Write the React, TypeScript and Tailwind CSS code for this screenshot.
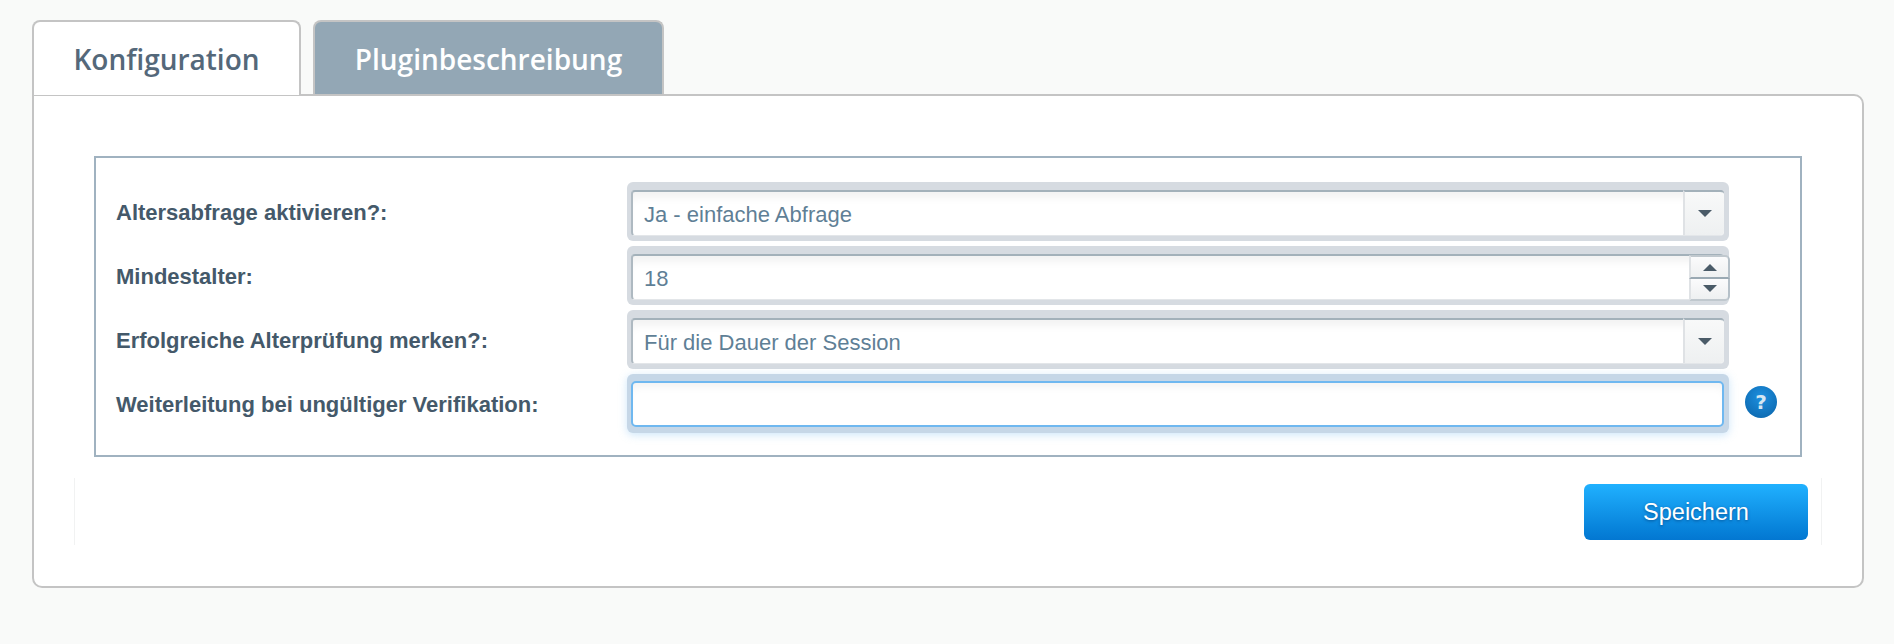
import React from "react";

function Arrow({ up = false }: { up?: boolean }) {
  return (
    <svg width="18" height="10" viewBox="0 0 18 10" className="block">
      <path d={up ? "M9 2 L16 9 L2 9 Z" : "M2 1 L16 1 L9 8 Z"} fill="#4a5b68" />
    </svg>
  );
}

function Ring({ focus = false, children }: { focus?: boolean; children: React.ReactNode }) {
  return (
    <div
      className={
        "relative w-[1102px] h-[59px] rounded-[6px] pt-2 pl-1 pr-[5px] pb-[5px] shrink-0 " +
        (focus ? "bg-[#c6d7e7] shadow-[0_2px_8px_rgba(111,184,240,0.35)]" : "bg-[#d6dbe1]")
      }
    >
      {children}
    </div>
  );
}

function Field({ value, kind }: { value: string; kind: "select" | "spin" }) {
  return (
    <div className="relative h-full bg-white rounded-[4px] border-t-2 border-l-2 border-t-[#a3b1ba] border-l-[#aeb9c1] border-b border-b-[#e3e6e9] shadow-[inset_0_10px_8px_-4px_rgba(0,0,0,0.05)] flex items-center pl-[11px] pt-0.5 text-[22px] text-[#5f7f96]">
      {value}
      {kind === "select" ? (
        <div className="absolute right-0 -top-[2px] bottom-0 w-[41px] border-l-2 border-t-2 border-l-[#dfe2e5] border-t-[#a3b1ba] bg-gradient-to-b from-[#f8f9f9] to-[#eef0f1] flex items-center justify-center rounded-r-[4px]">
          <Arrow />
        </div>
      ) : null}
    </div>
  );
}

const labelClass = "w-[511px] text-[22px] font-bold text-[#44596a] shrink-0 pt-0.5";

export default function App() {
  return (
    <div className="min-h-[644px] bg-[#f9faf9] pt-5 pl-[32px] pr-[30px] font-['Liberation_Sans',Arial,sans-serif]">
      <div className="flex gap-3 h-[74px] relative z-10">
        <div className="w-[269px] h-[75px] bg-white border-2 border-b-0 border-[#c4c4c4] rounded-t-[8px] flex items-center justify-center pt-px text-[#54687a] text-[28px] font-semibold font-['Open_Sans',sans-serif]">
          Konfiguration
        </div>
        <div className="w-[351px] h-[74px] bg-[#93a7b5] border-2 border-b-0 border-[#c4c4c4] rounded-t-[8px] flex items-center justify-center pt-px text-white text-[28px] font-semibold font-['Open_Sans',sans-serif]">
          Pluginbeschreibung
        </div>
      </div>
      <div className="bg-white border-2 border-[#c4c4c4] rounded-[10px] rounded-tl-none h-[494px] pt-[60px] px-[60px]">
        <div className="h-[301px] border-2 border-[#a0b2c0] pt-6 pl-5 flex flex-col gap-[5px]">
          <div className="flex items-center">
            <div className={labelClass}>Altersabfrage aktivieren?:</div>
            <Ring><Field value="Ja - einfache Abfrage" kind="select" /></Ring>
          </div>
          <div className="flex items-center">
            <div className={labelClass}>Mindestalter:</div>
            <Ring>
              <Field value="18" kind="spin" />
              <div className="absolute -right-px top-[9px] w-[41px] h-[46px] flex flex-col">
                <div className="h-[24px] bg-gradient-to-b from-[#fbfbfc] to-[#eef0f1] border-2 border-t-[#c0c8ce] border-r-[#b5c0c8] border-b-[#9aa9b3] border-l-[#dfe2e5] rounded-tr-[5px] flex items-center justify-center">
                  <Arrow up />
                </div>
                <div className="h-[22px] bg-gradient-to-b from-[#fbfbfc] to-[#eef0f1] border-2 border-t-0 border-r-[#b5c0c8] border-b-[#c0c8ce] border-l-[#dfe2e5] rounded-br-[5px] flex items-center justify-center">
                  <Arrow />
                </div>
              </div>
            </Ring>
          </div>
          <div className="flex items-center">
            <div className={labelClass}>Erfolgreiche Alterprüfung merken?:</div>
            <Ring><Field value="Für die Dauer der Session" kind="select" /></Ring>
          </div>
          <div className="flex items-center">
            <div className={labelClass}>Weiterleitung bei ungültiger Verifikation:</div>
            <Ring focus>
              <div className="h-full -mt-px bg-white rounded-[5px] border-2 border-[#6fb8f0] shadow-[inset_0_8px_8px_-4px_rgba(0,0,0,0.05)]" />
            </Ring>
            <div className="ml-4 -mt-[3px] w-8 h-8 rounded-full bg-[radial-gradient(circle_at_50%_35%,#1d8fdf,#0a63a8)] flex items-center justify-center text-[#d5e6f2] text-[20px] font-bold font-['DejaVu_Sans',sans-serif]">
              ?
            </div>
          </div>
        </div>
        <div className="-mx-5 mt-[21px] h-[67px] border-x border-[#f1f2f2] flex items-start justify-end pt-[6px] pr-[13px]">
          <div className="w-[224px] h-[56px] rounded-[6px] bg-gradient-to-b from-[#20b1ff] to-[#0377d1] flex items-center justify-center pt-0.5 text-white text-[23.5px] [text-shadow:0_1px_3px_rgba(0,60,120,0.7)]">
            Speichern
          </div>
        </div>
      </div>
    </div>
  );
}
